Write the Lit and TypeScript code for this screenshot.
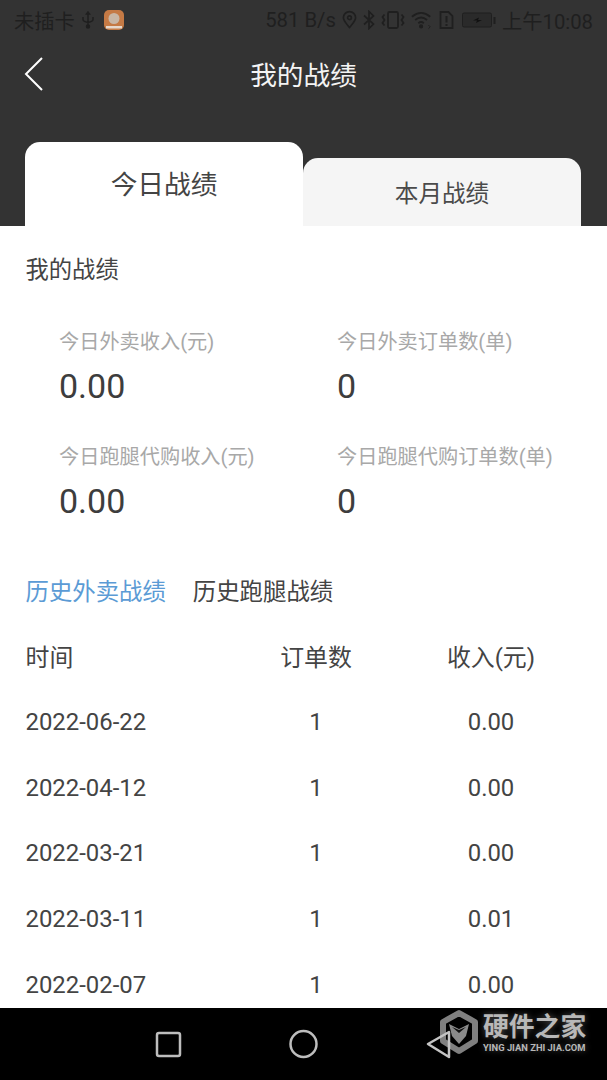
import { LitElement, html, css } from "lit";
import { customElement } from "lit/decorators.js";

const stats = [
  ["今日外卖收入(元)", "0.00"],
  ["今日外卖订单数(单)", "0"],
  ["今日跑腿代购收入(元)", "0.00"],
  ["今日跑腿代购订单数(单)", "0"],
];
const rows = [
  ["2022-06-22", "1", "0.00"],
  ["2022-04-12", "1", "0.00"],
  ["2022-03-21", "1", "0.00"],
  ["2022-03-11", "1", "0.01"],
  ["2022-02-07", "1", "0.00"],
];

@customElement("app-root")
export class AppRoot extends LitElement {
  static styles = css`
    :host { display: block; width: 607px; height: 1080px; overflow: hidden; position: relative; background: #fff;
      font-family: "Roboto", "Noto Sans CJK SC", sans-serif; color: #444; }
    .head { background: #333; height: 226px; display: flex; flex-direction: column; }
    .status { height: 40px; display: flex; align-items: center; padding: 0 14px; color: #1f1f1f; font-size: 20.3px; gap: 6px; }
    .status svg { display: block; flex: none; }
    .spacer { flex: 1; }
    .nav { height: 70px; display: flex; align-items: center; justify-content: center; position: relative; color: #f4f4f4; font-size: 26.7px; margin-top: -2px; }
    .back { position: absolute; left: 24px; top: 19px; }
    .tabs { flex: 1; display: flex; align-items: flex-end; padding: 0 25px; }
    .tab { display: flex; justify-content: center; border-radius: 15px 15px 0 0; width: 278px; box-sizing: border-box; }
    .tab.on { background: #fff; height: 84px; font-size: 26.7px; padding-top: 25px; line-height: 36px; color: #444; }
    .tab.off { background: #f5f5f5; height: 68px; font-size: 23.6px; padding-top: 19px; line-height: 34px; color: #4a4a4a; }
    .title { font-size: 23.3px; line-height: 32px; padding: 27.500px 25.500px 0; height: 59px; box-sizing: border-box; color: #444; }
    .grid { display: grid; grid-template-columns: 278px 1fr; padding: 0 0 0 59px; margin-top: 21px; }
    .cell { height: 115px; padding-top: 22px; box-sizing: border-box; }
    .label { font-size: 20.2px; line-height: 28px; color: #a8a8a8; white-space: nowrap; }
    .val { font-size: 34px; line-height: 44px; margin-top: 8px; color: #3d3d3d; }
    .hist { display: flex; gap: 27px; padding: 0 25.500px; font-size: 23.4px; line-height: 32px; margin-top: 40px; color: #444; }
    .hist .on { color: #5b9bd5; }
    .row { display: grid; grid-template-columns: 210.500px 160px 190px; padding-left: 25.500px; height: 65.7px; align-items: center; font-size: 23.9px; color: #444; }
    .row.h { margin-top: 13px; height: 68px; }
    .row span:nth-child(2), .row span:nth-child(3) { text-align: center; }
    .table { height: 410px; overflow: hidden; }
    .bar { position: absolute; left: 0; right: 0; top: 1008px; height: 72px; background: #000; }
    .bar svg { position: absolute; left: 0; top: 0; }
    .mark { position: absolute; left: 483px; top: 2px; color: #b8b8b8; font-size: 25.8px; font-weight: 700; line-height: 34px; white-space: nowrap; text-shadow: 0 0 6px rgba(255,255,255,.3); }
    .mark small { display: block; font: 700 9.4px/12px "Roboto", sans-serif; margin-top: -2px; }
  `;

  render() {
    return html`
      <div class="head">
        <div class="status">
          <span>未插卡</span>
          <svg width="14" height="18" viewBox="0 0 14 18" fill="none" stroke="#1f1f1f" stroke-width="1.5"><path d="M7 1v16M2 6v2.5q0 2 5 3q5-1 5-3V6"/><path d="M5.5 3 7 1l1.500 2z" fill="#1f1f1f"/><circle cx="7" cy="15.500" r="1.500" fill="#1f1f1f"/></svg>
          <svg width="20" height="20" viewBox="0 0 20 20" style="margin-left:3px"><rect width="20" height="20" rx="5" fill="#c57a45"/><circle cx="10" cy="8.500" r="5.500" fill="#c9b7a6"/><rect x="2" y="16" width="16" height="2.500" fill="#e6d8cc"/></svg>
          <span class="spacer"></span>
          <span>581 B/s</span>
          <svg width="15" height="20" viewBox="0 0 16 20" fill="none" stroke="#1f1f1f" stroke-width="1.800"><path d="M8 18C4 13 1.500 10.500 1.500 7.500a6.500 6.500 0 0 1 13 0C14.500 10.500 12 13 8 18z"/><circle cx="8" cy="7.500" r="2"/></svg>
          <svg width="12" height="20" viewBox="0 0 12 20" fill="none" stroke="#1f1f1f" stroke-width="1.700"><path d="M1 5.500 10.500 14 6 18.500V1.500L10.500 6 1 14.500"/></svg>
          <svg width="24" height="20" viewBox="0 0 24 20" fill="none" stroke="#1f1f1f" stroke-width="1.800"><rect x="7" y="2" width="10" height="16" rx="1.500"/><path d="M3.500 4.500 1.500 7l2 3-2 3 2 2.500M20.500 4.500l2 2.500-2 3 2 3-2 2.500"/></svg>
          <svg width="22" height="20" viewBox="0 0 24 20" fill="none" stroke="#1f1f1f" stroke-width="2"><path d="M1 6.500q10-8.500 20 0M4.500 10q6.500-5.500 13 0M8 13.500q3-2.500 6 0"/><circle cx="11" cy="17" r="1.300" fill="#1f1f1f"/><path d="M19 15.500l2 2-2 2" stroke-width="1"/></svg>
          <svg width="15" height="20" viewBox="0 0 14 20" fill="none" stroke="#1f1f1f" stroke-width="1.800"><path d="M1 2h8l4 4v12H1z"/><path d="M7 6v6.500M7 14v2" stroke-width="2"/></svg>
          <svg width="34" height="20" viewBox="0 0 34 20" style="margin-left:2px"><rect x="0.500" y="3" width="29" height="14" rx="1.500" fill="#2a2a2a" stroke="#1f1f1f"/><path d="M11 10.500l6-3-1 2.500h4l-6 3 1-2.500z" fill="#111"/><rect x="31.500" y="7" width="2" height="7" fill="#1f1f1f"/></svg>
          <span>上午10:08</span>
        </div>
        <div class="nav">
          <svg class="back" width="20" height="36" viewBox="0 0 20 36" fill="none" stroke="#fff" stroke-width="2"><path d="M18 1 2 17l16 16"/></svg>
          我的战绩
        </div>
        <div class="tabs">
          <div class="tab on">今日战绩</div>
          <div class="tab off">本月战绩</div>
        </div>
      </div>
      <div class="title">我的战绩</div>
      <div class="grid">
        ${stats.map(([l, v]) => html`<div class="cell"><div class="label">${l}</div><div class="val">${v}</div></div>`)}
      </div>
      <div class="hist"><span class="on">历史外卖战绩</span><span>历史跑腿战绩</span></div>
      <div class="table">
        <div class="row h"><span>时间</span><span>订单数</span><span>收入(元)</span></div>
        ${rows.map((r) => html`<div class="row"><span>${r[0]}</span><span>${r[1]}</span><span>${r[2]}</span></div>`)}
      </div>
      <div class="bar">
        <svg width="607" height="72" viewBox="0 0 607 72" fill="none">
          <rect x="157" y="25" width="23" height="23" rx="2" stroke="#bdbdbd" stroke-width="2.500"/>
          <circle cx="303.500" cy="36" r="13" stroke="#bdbdbd" stroke-width="2.500"/>
          <path d="M459 5 475 14V33L459 43 443 33V14z" stroke="#7f7f7f" stroke-width="6" stroke-linejoin="round"/>
          <path d="M449 16 459 21 469 16 466 28 459 36 452 28z" fill="#8a8a8a"/>
          <path d="M452 19 459 25 466 19 459 22z" fill="#111"/>
          <path d="M428 36 449 24v25z" stroke="#c4c4c4" stroke-width="2.500" stroke-linejoin="round"/>
        </svg>
        <div class="mark">硬件之家<small>YING JIAN ZHI JIA.COM</small></div>
      </div>
    `;
  }
}
